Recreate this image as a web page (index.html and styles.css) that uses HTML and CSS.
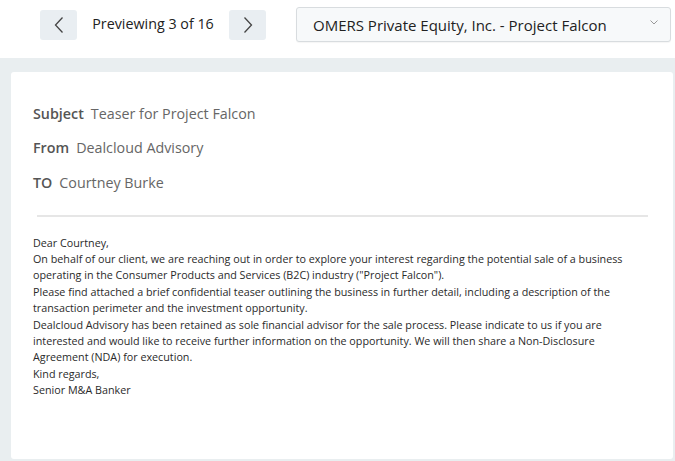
FILE: index.html
```html
<!DOCTYPE html>
<html>
<head>
<meta charset="utf-8">
<link rel="stylesheet" href="styles.css">
</head>
<body>
<div class="page">
  <header class="topbar">
    <button class="nav-btn" aria-label="Previous">
      <svg width="12" height="18" viewBox="0 0 12 18"><path d="M9.5 1.5 L2.5 9 L9.5 16.5" fill="none" stroke="#444" stroke-width="1.3"/></svg>
    </button>
    <span class="counter">Previewing 3 of 16</span>
    <button class="nav-btn" aria-label="Next">
      <svg width="12" height="18" viewBox="0 0 12 18"><path d="M2.5 1.5 L9.5 9 L2.5 16.5" fill="none" stroke="#444" stroke-width="1.3"/></svg>
    </button>
    <div class="select">
      <span class="select-text">OMERS Private Equity, Inc. - Project Falcon</span>
      <svg class="caret" width="8" height="5" viewBox="0 0 8 5"><path d="M0.5 0.5 L4 4 L7.5 0.5" fill="none" stroke="#999" stroke-width="1"/></svg>
    </div>
  </header>
  <main class="content">
    <section class="card">
      <div class="meta">
        <div class="meta-row"><span class="label">Subject</span><span class="value">Teaser for Project Falcon</span></div>
        <div class="meta-row"><span class="label">From</span><span class="value">Dealcloud Advisory</span></div>
        <div class="meta-row"><span class="label">TO</span><span class="value">Courtney Burke</span></div>
      </div>
      <hr class="divider">
      <div class="body">
        <p>Dear Courtney,</p>
        <p>On behalf of our client, we are reaching out in order to explore your interest regarding the potential sale of a business operating in the Consumer Products and Services (B2C) industry ("Project Falcon").</p>
        <p>Please find attached a brief confidential teaser outlining the business in further detail, including a description of the transaction perimeter and the investment opportunity.</p>
        <p>Dealcloud Advisory has been retained as sole financial advisor for the sale process. Please indicate to us if you are interested and would like to receive further information on the opportunity. We will then share a Non-Disclosure Agreement (NDA) for execution.</p>
        <p>Kind regards,</p>
        <p>Senior M&amp;A Banker</p>
      </div>
    </section>
  </main>
</div>
</body>
</html>
```
FILE: styles.css
```css
html, body {
  margin: 0;
  padding: 0;
  background: #fff;
  font-family: "Open Sans", "Noto Sans", sans-serif;
}
.page {
  width: 675px;
  height: 461px;
  display: flex;
  flex-direction: column;
  overflow: hidden;
}
.topbar {
  height: 58px;
  flex: none;
  display: flex;
  align-items: flex-start;
  box-sizing: border-box;
  padding-left: 40px;
}
.nav-btn {
  margin-top: 10px;
  width: 37px;
  height: 30px;
  border: none;
  border-radius: 3px;
  background: #e9eef2;
  display: flex;
  align-items: center;
  justify-content: center;
  padding: 0;
}
.counter {
  margin-top: 14px;
  width: 152px;
  text-align: center;
  font-size: 14.3px;
  line-height: 20px;
  color: #222;
}
.select {
  margin-top: 7px;
  margin-left: 30px;
  width: 375px;
  height: 35px;
  box-sizing: border-box;
  border: 1px solid #d8dcdf;
  border-radius: 3px;
  background: #f7f9fa;
  display: flex;
  align-items: center;
  padding-left: 16px;
  padding-right: 12px;
  box-shadow: 0 1px 1px rgba(0,0,0,0.04);
}
.select-text {
  flex: 1;
  font-size: 15px;
  color: #222;
}
.caret { flex: none; margin-top: -4px; }
.content {
  flex: 1;
  background: #e9eef0;
  padding: 14px 2px 2px 11px;
  box-sizing: border-box;
}
.card {
  background: #fff;
  height: 387px;
  border-radius: 3px;
  box-sizing: border-box;
  padding: 24px 25px 0 22px;
}
.meta-row {
  height: 34.5px;
  display: flex;
  align-items: center;
  font-size: 14.3px;
}
.label {
  font-weight: 600;
  color: #555;
  margin-right: 7px;
}
.value {
  color: #666;
}
.divider {
  border: none;
  border-top: 2px solid #e6e6e6;
  margin: 15px 0 0 4px;
}
.body {
  margin-top: 18px;
  font-size: 10.75px;
  line-height: 16.4px;
  color: #2a2a2a;
}
.body p { margin: 0; }
```
